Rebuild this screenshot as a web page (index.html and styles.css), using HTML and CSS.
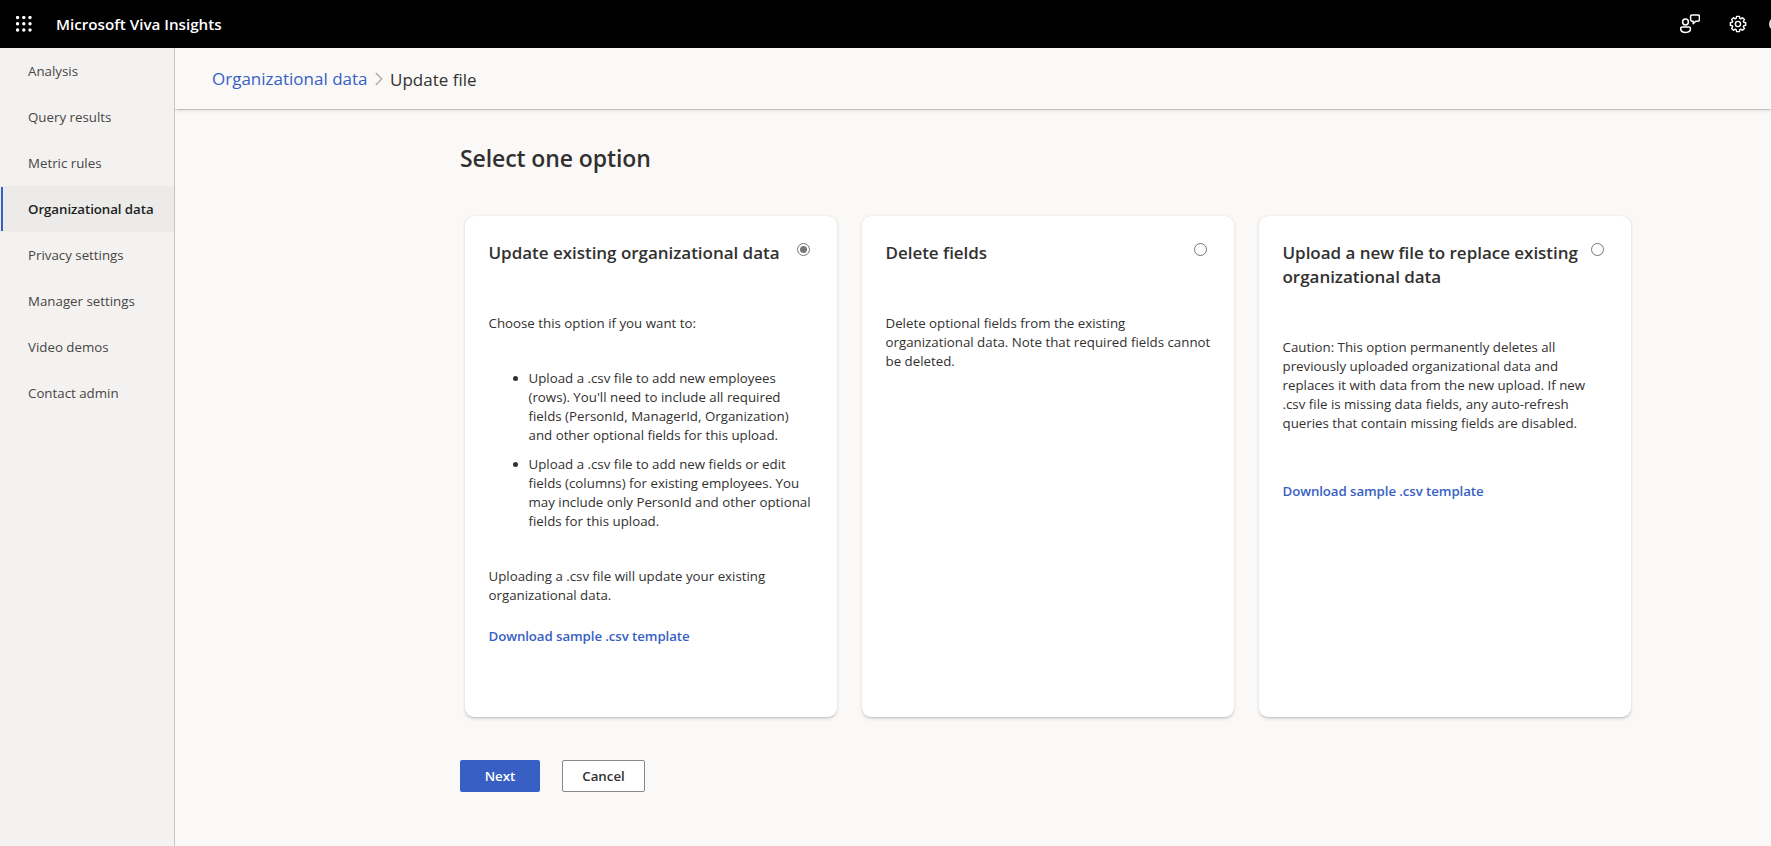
FILE: index.html
```html
<!DOCTYPE html>
<html lang="en">
<head>
<meta charset="utf-8">
<title>Microsoft Viva Insights</title>
<link rel="stylesheet" href="styles.css">
</head>
<body>
<header class="topbar">
  <svg class="waffle" width="16" height="16" viewBox="0 0 16 16" fill="#fff"><circle cx="1.6" cy="1.6" r="1.7"/><circle cx="7.8" cy="1.6" r="1.7"/><circle cx="14" cy="1.6" r="1.7"/><circle cx="1.6" cy="7.8" r="1.7"/><circle cx="7.8" cy="7.8" r="1.7"/><circle cx="14" cy="7.8" r="1.7"/><circle cx="1.6" cy="14" r="1.7"/><circle cx="7.8" cy="14" r="1.7"/><circle cx="14" cy="14" r="1.7"/></svg>
  <span class="brand">Microsoft Viva Insights</span>
  <svg class="feedback" width="20" height="20" viewBox="0 0 20 20" fill="none" stroke="#fff" stroke-width="1.5" stroke-linejoin="round"><circle cx="5.5" cy="8" r="2.9"/><path d="M2.4 12.9h6.400a1.700 1.700 0 0 1 1.700 1.700c0 2.600-2 3.900-4.900 3.900S.7 17.200.7 14.600a1.700 1.700 0 0 1 1.700-1.700z"/><path d="M12 .9h6a1.400 1.400 0 0 1 1.400 1.400v3.500a1.400 1.400 0 0 1-1.400 1.400h-2.300l-2.500 2.500V7.200H12a1.400 1.400 0 0 1-1.400-1.400V2.300A1.400 1.400 0 0 1 12 .9z"/></svg>
  <svg class="gear" width="18" height="18" viewBox="0 0 18 18" fill="none" stroke="#fff" stroke-width="1.4" stroke-linejoin="round"><path d="M7.600 1.400h2.800l.4 2 1 .4 1.700-1.100 1.900 1.900-1.100 1.700.4 1 2 .4v2.600l-2 .4-.4 1 1.100 1.700-1.900 1.900-1.700-1.100-1 .4-.4 2H7.600l-.4-2-1-.4-1.700 1.100-1.900-1.900 1.100-1.700-.4-1-2-.4V7.700l2-.4.4-1-1.100-1.700 1.900-1.900 1.700 1.100 1-.4z"/><circle cx="9" cy="9" r="2.600"/></svg>
  <span class="avatar"></span>
</header>
<div class="shell">
  <nav class="side">
    <a class="item">Analysis</a>
    <a class="item">Query results</a>
    <a class="item">Metric rules</a>
    <a class="item active">Organizational data</a>
    <a class="item">Privacy settings</a>
    <a class="item">Manager settings</a>
    <a class="item">Video demos</a>
    <a class="item">Contact admin</a>
  </nav>
  <main class="main">
    <div class="crumbs">
      <a class="crumb-link">Organizational data</a>
      <svg class="chevron" width="8" height="14" viewBox="0 0 8 14" fill="none" stroke="#a8a6a4" stroke-width="1.2"><path d="M.8 1 6.800 7 .8 13"/></svg>
      <span class="crumb-now">Update file</span>
    </div>
    <section class="content">
      <h1 class="title">Select one option</h1>
      <div class="cards">
        <article class="card">
          <div class="card-head"><h2 class="card-title">Update existing organizational data</h2><span class="radio checked"></span></div>
          <p class="text">Choose this option if you want to:</p>
          <ul class="list">
            <li>Upload a .csv file to add new employees<br>(rows). You'll need to include all required<br>fields (PersonId, ManagerId, Organization)<br>and other optional fields for this upload.</li>
            <li>Upload a .csv file to add new fields or edit<br>fields (columns) for existing employees. You<br>may include only PersonId and other optional<br>fields for this upload.</li>
          </ul>
          <p class="text after-list">Uploading a .csv file will update your existing<br>organizational data.</p>
          <a class="download">Download sample .csv template</a>
        </article>
        <article class="card">
          <div class="card-head"><h2 class="card-title">Delete fields</h2><span class="radio"></span></div>
          <p class="text">Delete optional fields from the existing<br>organizational data. Note that required fields cannot<br>be deleted.</p>
        </article>
        <article class="card">
          <div class="card-head"><h2 class="card-title">Upload a new file to replace existing<br>organizational data</h2><span class="radio"></span></div>
          <p class="text">Caution: This option permanently deletes all<br>previously uploaded organizational data and<br>replaces it with data from the new upload. If new<br>.csv file is missing data fields, any auto-refresh<br>queries that contain missing fields are disabled.</p>
          <a class="download far">Download sample .csv template</a>
        </article>
      </div>
      <div class="actions"><button class="btn primary">Next</button><button class="btn cancel">Cancel</button></div>
    </section>
  </main>
</div>
</body>
</html>
```
FILE: styles.css
```css
* { box-sizing: border-box; }
body {
  margin: 0;
  height: 846px;
  overflow: hidden;
  background: #faf9f8;
  color: #323130;
  font: 13.3px/19px "Open Sans", "Noto Sans", sans-serif;
  white-space: nowrap;
}
h1, h2, p, ul { margin: 0; }
.topbar {
  display: flex;
  align-items: center;
  height: 48px;
  overflow: hidden;
  background: #000;
  color: #fff;
}
.topbar svg, .avatar { flex: none; }
.waffle { margin-left: 16px; }
.brand { margin-left: 24px; width: 1624px; flex: none; font-size: 15.2px; font-weight: 600; }
.feedback { margin-top: -1px; }
.gear { margin-left: 29px; }
.avatar { margin-left: 22px; width: 32px; height: 14px; border-radius: 7px; background: #ddd; }
.shell { display: flex; height: 798px; }
.side {
  flex: none;
  width: 175px;
  background: #f3f2f1;
  border-right: 1px solid #c8c6c4;
}
.item {
  display: flex;
  align-items: center;
  height: 46px;
  padding: 1px 0 0 28px;
  color: #484644;
}
.item.active {
  background: linear-gradient(#3860c4, #3860c4) 1px 1px / 2px 44px no-repeat #edebe9;
  color: #201f1e;
  font-weight: 600;
  letter-spacing: -0.07px;
}
.main { flex: 1; min-width: 0; overflow: hidden; }
.crumbs {
  display: flex;
  align-items: center;
  height: 61px;
  padding-left: 37px;
  box-shadow: 0 1.6px 3.6px rgba(0, 0, 0, .13), 0 .6px 1px rgba(0, 0, 0, .16);
  font-size: 17px;
}
.crumb-link { width: 163px; color: #3860c4; }
.crumb-now { margin-left: 7px; padding-top: 1px; }
.content { padding: 33px 0 0 285px; }
.title { font-size: 23px; line-height: 32px; font-weight: 600; letter-spacing: -0.1px; }
.cards { display: flex; gap: 25px; padding: 42px 0 0 5px; }
.card {
  flex: none;
  width: 372px;
  height: 501px;
  padding: 24px 24px 24px 23.5px;
  border-radius: 9px;
  background: #fff;
  box-shadow: 0 1.6px 3.6px rgba(0, 0, 0, .13), 0 .3px .9px rgba(0, 0, 0, .11);
}
.card-head { display: flex; justify-content: space-between; }
.card-title { padding-top: 1px; font-size: 17px; line-height: 24px; font-weight: 600; letter-spacing: -0.03px; }
.radio {
  flex: none;
  display: grid;
  place-items: center;
  width: 13px;
  height: 13px;
  margin: 3px 3px 0 0;
  border: 1px solid #767676;
  border-radius: 50%;
}
.checked::after { content: ""; width: 7px; height: 7px; border-radius: 50%; background: #767676; }
.text { margin-top: 49px; }
.list { margin-top: 36px; padding-left: 40px; }
.list li + li { margin-top: 10px; }
.after-list { margin-top: 36px; }
.download { display: block; margin-top: 22px; color: #3860c4; font-weight: 600; letter-spacing: -0.1px; }
.far { margin-top: 49px; }
.actions { display: flex; gap: 22px; margin-top: 43px; }
.btn {
  height: 32px;
  padding: 0;
  border-radius: 2px;
  font: 600 13.3px/19px "Open Sans", "Noto Sans", sans-serif;
}
.primary { width: 80px; border: 0; background: #3860c4; color: #fff; }
.cancel { width: 83px; border: 1px solid #8a8886; background: #fff; color: #323130; }
```
